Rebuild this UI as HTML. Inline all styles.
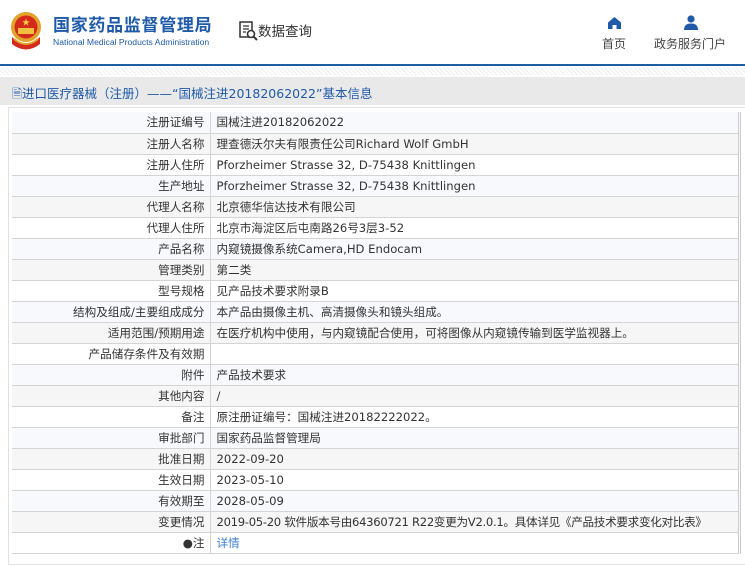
<!DOCTYPE html>
<html><head><meta charset="utf-8"><style>
*{margin:0;padding:0;box-sizing:border-box}
body{width:745px;height:567px;overflow:hidden;background:#fff;font-family:"Liberation Sans","Noto Sans CJK SC",sans-serif;position:relative}
.hdr{position:absolute;left:0;top:0;width:745px;height:66px;border-bottom:2px solid #1e5d9f}
.hatch{position:absolute;left:0;top:68px;width:745px;height:7px;background:repeating-linear-gradient(45deg,#eee 0 1px,#fff 1px 3px)}
.t1{position:absolute;left:53px;top:11px;font-size:17px;font-weight:bold;color:#1e5aa8;letter-spacing:0.7px;font-family:"Noto Sans CJK SC",sans-serif}
.t2{position:absolute;left:53px;top:37px;font-size:8.6px;color:#1e5aa8}
.q{position:absolute;left:258px;top:20px;font-size:13.5px;color:#333;font-family:"Noto Sans CJK SC",sans-serif}
.nav{position:absolute;top:35px;font-size:12px;color:#444;font-family:"Noto Sans CJK SC",sans-serif}
.bar{position:absolute;left:0;top:77px;width:745px;height:28px;background:#e9e9e9;font-size:12.5px;color:#1e5aa8;padding:6px 0 0 12px;font-family:"DejaVu Sans","Noto Sans CJK SC",sans-serif}
.panel{position:absolute;left:8px;top:107px;width:737px;height:458px;border:1px solid #e2e2e2;border-right:none}
table{position:absolute;left:12px;top:112px;width:729px;border-collapse:collapse;font-size:11.6px;color:#333;border-right:3px double #ccc;font-family:"DejaVu Sans","Noto Sans CJK SC",sans-serif}
td{height:21px;border-bottom:1px solid #d4d4d4;padding:0 6px;white-space:nowrap}
td.l{width:198px;text-align:right;border-right:1px solid #d4d4d4;padding-right:5px}
tr:nth-child(3n+1) td{background:#f8f9fc}
tr:nth-child(3n+2) td{background:#f6f6f6}
tr:nth-child(3n) td{background:#fff}
a{color:#3a7bd5;text-decoration:none}
</style></head><body>
<div class="hdr"></div><div class="hatch"></div>
<div class="panel"></div>
<svg style="position:absolute;left:9px;top:11px" width="34" height="40" viewBox="0 0 34 40">
<circle cx="17" cy="16" r="15" fill="#e2a32a"/><circle cx="17" cy="16" r="11.5" fill="#d42a1c"/>
<text x="17" y="14" font-size="8" fill="#f5d040" text-anchor="middle">★</text>
<rect x="9" y="17" width="16" height="6" fill="#f0c040"/>
<path d="M3 26 Q17 40 31 26 L31 33 Q17 44 3 33Z" fill="#d42a1c"/>
<path d="M5 28 Q17 38 29 28" stroke="#e2a32a" stroke-width="2" fill="none"/>
</svg>
<div class="t1">国家药品监督管理局</div>
<div class="t2">National Medical Products Administration</div>
<svg style="position:absolute;left:239px;top:21px" width="20" height="20" viewBox="0 0 20 20"><rect x="1" y="1" width="12" height="15" fill="none" stroke="#333" stroke-width="1.5"/><path d="M4 5h6M4 8h6M4 11h3" stroke="#333" stroke-width="1.3"/><circle cx="12" cy="13" r="3.5" fill="#fff" stroke="#333" stroke-width="1.6"/><path d="M14.5 15.5l3.5 3.5" stroke="#333" stroke-width="2"/></svg>
<div class="q">数据查询</div>
<svg style="position:absolute;left:608px;top:17px" width="13" height="12" viewBox="0 0 13 12"><path d="M6.5 0L0 5.5V12h4.5V8h4v4H13V5.5Z" fill="#1e5aa8"/></svg>
<div class="nav" style="left:602px">首页</div>
<svg style="position:absolute;left:684px;top:15px" width="14" height="15" viewBox="0 0 14 15"><circle cx="7" cy="4" r="3.6" fill="#1e5aa8"/><path d="M0 15Q0 8.5 7 8.5T14 15Z" fill="#1e5aa8"/></svg>
<div class="nav" style="left:654px">政务服务门户</div>
<div class="bar">🗎进口医疗器械（注册）——“国械注进20182062022”基本信息</div>
<table>
<tr><td class="l">注册证编号</td><td>国械注进20182062022</td></tr>
<tr><td class="l">注册人名称</td><td>理查德沃尔夫有限责任公司Richard Wolf GmbH</td></tr>
<tr><td class="l">注册人住所</td><td>Pforzheimer Strasse 32, D-75438 Knittlingen</td></tr>
<tr><td class="l">生产地址</td><td>Pforzheimer Strasse 32, D-75438 Knittlingen</td></tr>
<tr><td class="l">代理人名称</td><td>北京德华信达技术有限公司</td></tr>
<tr><td class="l">代理人住所</td><td>北京市海淀区后屯南路26号3层3-52</td></tr>
<tr><td class="l">产品名称</td><td>内窥镜摄像系统Camera,HD Endocam</td></tr>
<tr><td class="l">管理类别</td><td>第二类</td></tr>
<tr><td class="l">型号规格</td><td>见产品技术要求附录B</td></tr>
<tr><td class="l">结构及组成/主要组成成分</td><td>本产品由摄像主机、高清摄像头和镜头组成。</td></tr>
<tr><td class="l">适用范围/预期用途</td><td>在医疗机构中使用，与内窥镜配合使用，可将图像从内窥镜传输到医学监视器上。</td></tr>
<tr><td class="l">产品储存条件及有效期</td><td></td></tr>
<tr><td class="l">附件</td><td>产品技术要求</td></tr>
<tr><td class="l">其他内容</td><td>/</td></tr>
<tr><td class="l">备注</td><td>原注册证编号：国械注进20182222022。</td></tr>
<tr><td class="l">审批部门</td><td>国家药品监督管理局</td></tr>
<tr><td class="l">批准日期</td><td>2022-09-20</td></tr>
<tr><td class="l">生效日期</td><td>2023-05-10</td></tr>
<tr><td class="l">有效期至</td><td>2028-05-09</td></tr>
<tr><td class="l">变更情况</td><td style="letter-spacing:-0.3px">2019-05-20 软件版本号由64360721 R22变更为V2.0.1。具体详见《产品技术要求变化对比表》</td></tr>
<tr><td class="l" style="background:#fff">●注</td><td style="background:#fff"><a>详情</a></td></tr>
</table>
</body></html>
